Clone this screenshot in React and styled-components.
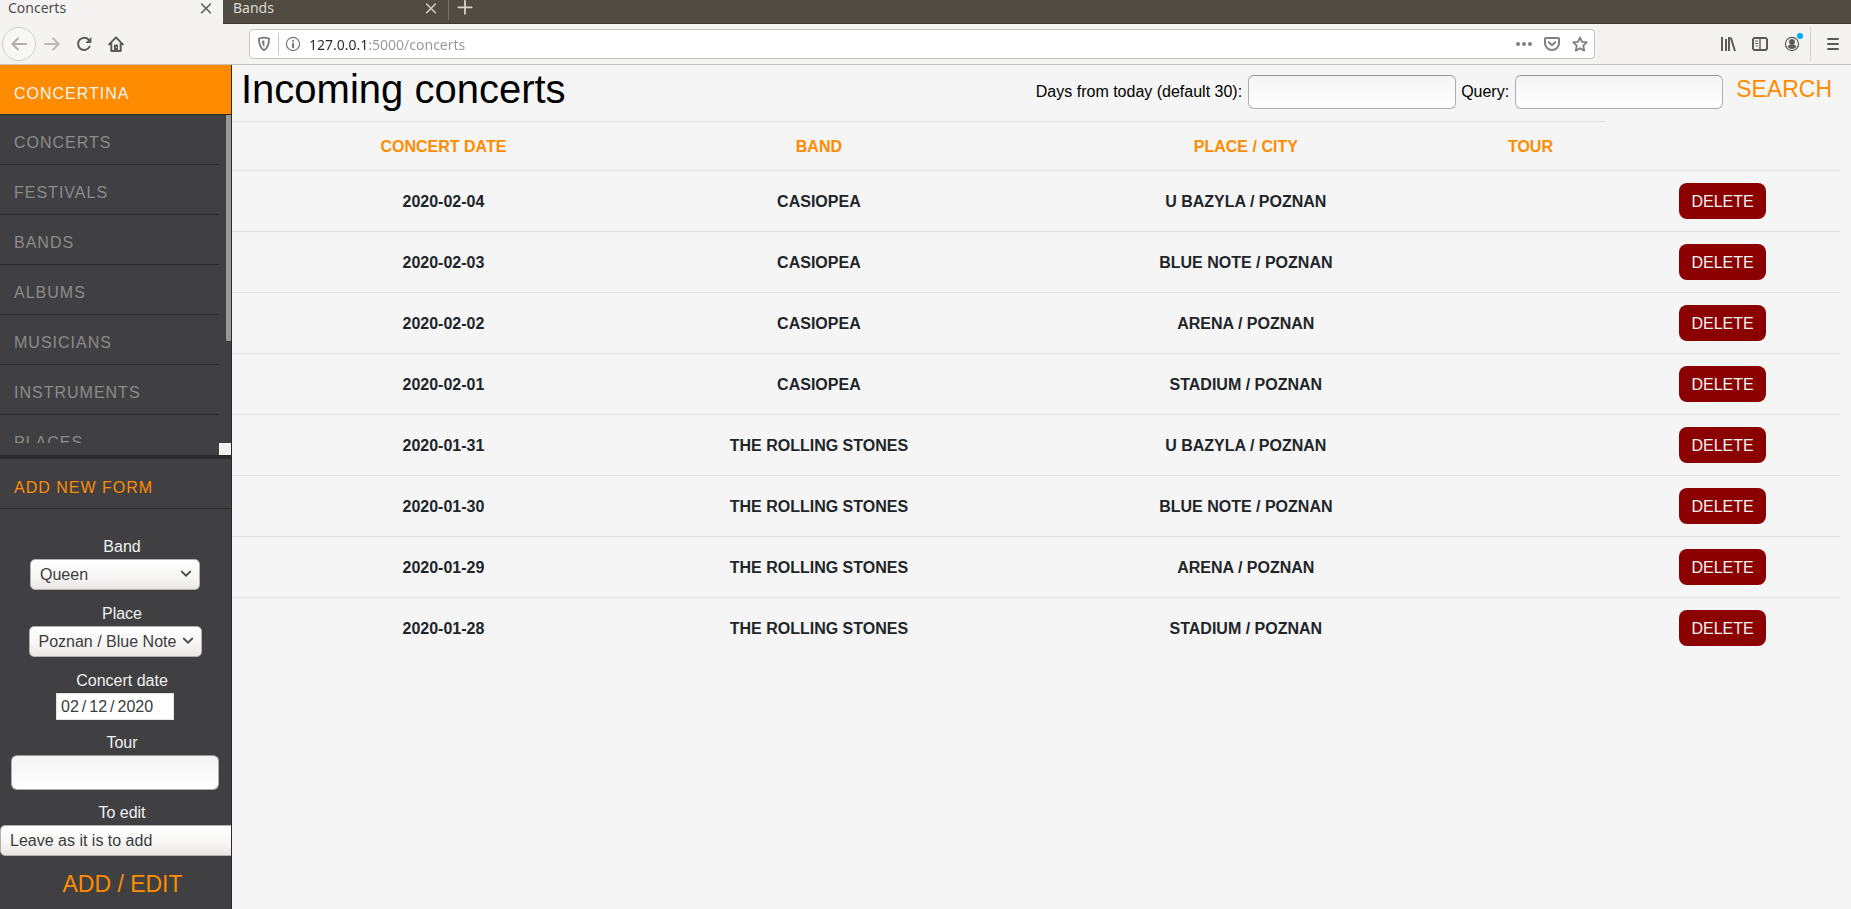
import React from "react";
import styled, { createGlobalStyle, css } from "styled-components";

const ORANGE = "#ff8c00";
const PANEL = "#404042";
const LINE = "#2a2a2a";
const UI_FONT = '"Noto Sans", "Open Sans", sans-serif';
const PAGE_FONT = '"Liberation Sans", Arial, sans-serif';

const GlobalStyle = createGlobalStyle`
  *, *::before, *::after { box-sizing: border-box; }
  body { margin: 0; background: #f5f5f5; font-family: ${PAGE_FONT}; font-size: 16px; line-height: 24px; }
  button, input, select { font: inherit; margin: 0; }
  button { cursor: pointer; }
`;

const Shell = styled.div`
  display: flex;
  flex-direction: column;
  height: 100vh;
  overflow: hidden;
`;

/* ---------- browser chrome ---------- */

const TabStrip = styled.div`
  display: flex;
  flex: none;
  height: 24px;
  background: #504c44;
  font-family: ${UI_FONT};
  font-size: 14px;
  line-height: 16px;
  border-bottom: 1px solid #3b3934;
`;

const Tab = styled.div`
  display: flex;
  justify-content: space-between;
  align-items: flex-start;
  width: ${(p) => (p.$active ? 223 : 225)}px;
  height: ${(p) => (p.$active ? 24 : 23)}px;
  padding: 0 9px 0 ${(p) => (p.$active ? 8 : 10)}px;
  background: ${(p) => (p.$active ? "#f4f3f1" : "transparent")};
  color: ${(p) => (p.$active ? "#4c4c4c" : "#dfdbd2")};
`;

const TabSeparator = styled.span`
  width: 1px;
  height: 20px;
  background: #76726a;
`;

const IconButton = styled.button`
  display: flex;
  align-items: center;
  justify-content: center;
  flex: none;
  width: ${(p) => p.$w || 16}px;
  height: ${(p) => p.$h || 16}px;
  padding: 0;
  border: 0;
  background: none;
  color: ${(p) => p.$color || "#5b5b5b"};
  position: relative;
  ${(p) =>
    p.$round &&
    css`
      border: 1px solid #cfcdca;
      border-radius: 50%;
      background: #f8f7f6;
    `}
`;

const Toolbar = styled.div`
  display: flex;
  align-items: center;
  flex: none;
  height: 41px;
  padding: 0 10px 0 2px;
  background: #f4f3f1;
  border-bottom: 1px solid #c4c2be;
`;

const NavButtons = styled.div`
  display: flex;
  align-items: center;
  width: 247px;
`;

const UrlBar = styled.div`
  display: flex;
  align-items: center;
  flex: 1;
  height: 30px;
  padding: 0 6px;
  background: #fff;
  border: 1px solid #c6c4c0;
  border-radius: 4px;
`;

const UrlSeparator = styled.span`
  width: 1px;
  height: 22px;
  margin: 0 6px;
  background: #c9c9c9;
`;

const UrlInput = styled.input`
  flex: 1;
  min-width: 0;
  height: 28px;
  padding: 0;
  border: 0;
  outline: 0;
  font-family: ${UI_FONT};
  font-size: 14px;
  color: transparent;
  caret-color: #333;
  background: linear-gradient(to right, #2b2b2b 59px, #989898 59px);
  background-clip: text;
  -webkit-background-clip: text;
`;

const UrlActions = styled.div`
  display: flex;
  gap: 12px;
  padding-left: 12px;
`;

const UrlInfo = styled.div`
  display: flex;
  padding-right: 8px;
`;

const BrowserTools = styled.div`
  display: flex;
  align-items: center;
  gap: 16px;
  padding-left: 125px;
`;

const ToolSeparator = styled.span`
  width: 1px;
  height: 34px;
  margin: 0 -2px 0 -6px;
  background: #d2d0cd;
`;

const Notice = styled.span`
  position: absolute;
  top: -3px;
  right: -3px;
  width: 6px;
  height: 6px;
  border-radius: 50%;
  background: #00a8ff;
`;

/* ---------- page ---------- */

const Page = styled.div`
  display: flex;
  flex: 1;
  min-height: 0;
`;

const Sidebar = styled.aside`
  display: flex;
  flex-direction: column;
  flex: none;
  width: 232px;
  background: ${PANEL};
  border-right: 1px solid ${LINE};
  overflow: hidden;
`;

const sideLine = css`
  display: block;
  flex: none;
  height: 50px;
  padding: 17px 14px 0;
  margin: 0;
  border-bottom: 1px solid ${LINE};
  font-size: 16px;
  font-weight: 400;
  letter-spacing: 1px;
  text-decoration: none;
  text-transform: uppercase;
`;

const Brand = styled.a`
  ${sideLine}
  background: ${ORANGE};
  color: #f4f4f4;
`;

const NavLink = styled.a`
  ${sideLine}
  padding-top: 16px;
  color: #8b8b8b;
`;

const FormTitle = styled.h2`
  ${sideLine}
  color: ${ORANGE};
`;

const NavArea = styled.nav`
  display: grid;
  flex: none;
  grid-template-columns: 1fr 12px;
  grid-template-rows: 328px 12px;
  border-bottom: 4px solid ${LINE};
`;

const NavList = styled.ul`
  margin: 0;
  padding: 0;
  list-style: none;
  overflow: hidden;
`;

const ScrollTrack = styled.div`
  display: flex;
  justify-content: flex-end;
`;

const ScrollThumb = styled.div`
  width: 5px;
  height: 226px;
  border-radius: 0 0 1px 1px;
  background: #999;
`;

const ScrollCorner = styled.div`
  grid-column: 2;
  background: #f2f1f0;
`;

const AddForm = styled.form`
  display: flex;
  flex-direction: column;
  align-items: center;
  padding: 26px 1px 0 0;
`;

const Field = styled.div`
  display: flex;
  flex-direction: column;
  align-items: center;
  width: 100%;
  margin-bottom: ${(p) => (p.$select ? 12 : 11)}px;
`;

const FieldLabel = styled.label`
  padding-left: 14px;
  color: #f1f1f1;
`;

const SelectBox = styled.div`
  position: relative;
  width: ${(p) => p.$w}px;
  align-self: ${(p) => (p.$start ? "flex-start" : "center")};
  svg {
    position: absolute;
    right: 8px;
    top: 10px;
    pointer-events: none;
    color: #4a4a4a;
  }
`;

const Select = styled.select`
  display: block;
  appearance: none;
  width: 100%;
  height: 31px;
  padding: 0 20px 0 9px;
  border: 1px solid #b3b1ad;
  border-radius: 5px;
  background: linear-gradient(#fff, #f6f5f4 60%, #e9e7e5);
  color: #3c3c3c;
`;

const TextInput = styled.input`
  width: 208px;
  height: ${(p) => p.$h || 34}px;
  padding: 0 8px;
  border: 1px solid #aeaeae;
  border-top-color: #969696;
  border-radius: 6px;
  background: linear-gradient(#f4f4f4, #fff);
  color: #3c3c3c;
`;

const DateInput = styled.input`
  width: 118px;
  height: 27px;
  padding: 0 0 0 3px;
  border: 1px solid #e3e3e3;
  border-radius: 0;
  background: #fff;
  color: #3c3c3c;
  &::-webkit-calendar-picker-indicator { display: none; }
  &::-webkit-datetime-edit-text { padding: 0 2px; }
`;

const TextButton = styled.button`
  padding: 0 12px 0 13px;
  border: 0;
  background: none;
  color: ${ORANGE};
  font-size: 23px;
  line-height: 28px;
  text-transform: uppercase;
`;

const FormAction = styled.div`
  padding: 2px 0 0 14px;
`;

const Main = styled.main`
  flex: 1;
  min-width: 0;
  overflow: hidden;
`;

const MainHeader = styled.header`
  display: flex;
  justify-content: space-between;
  align-items: flex-start;
  height: 56px;
  padding: 0 7px 0 9px;
`;

const Title = styled.h1`
  margin: 0;
  font-size: 40px;
  font-weight: 400;
  line-height: 48px;
  color: #000;
`;

const SearchForm = styled.form`
  display: flex;
  align-items: flex-start;
  padding-top: 10px;
`;

const SearchField = styled.label`
  display: flex;
  align-items: center;
  gap: 6px;
  margin-left: 5px;
  color: #000;
`;

const Table = styled.table`
  width: calc(100% - 11px);
  table-layout: fixed;
  border-collapse: separate;
  border-spacing: 0;
  text-align: center;
  text-transform: uppercase;
`;

const Col = styled.col`
  width: ${(p) => p.$w}%;
`;

const HeadCell = styled.th`
  padding: 13px 12px 11px;
  border-top: 1px solid #dee2e6;
  color: ${ORANGE};
`;

const Cell = styled.td`
  padding: ${(p) => (p.$action ? "12px" : "13px 12px 11px")};
  border-top: 1px solid #dee2e6;
  color: #212529;
  font-weight: 700;
`;

const DeleteButton = styled.button`
  display: inline-block;
  vertical-align: top;
  height: 36px;
  padding: 2px 12px 0;
  border: 0;
  border-radius: 8px;
  background: #8b0000;
  color: #f4f4f4;
  font-weight: 400;
  text-transform: uppercase;
`;

/* ---------- icons ---------- */

function Icon({ size = 16, w = 2, children, ...rest }) {
  return (
    <svg width={size} height={size} viewBox="0 0 16 16" fill="none" stroke="currentColor" strokeWidth={w}
      strokeLinecap="round" strokeLinejoin="round" aria-hidden="true" {...rest}>
      {children}
    </svg>
  );
}

const CloseIcon = () => <Icon w={1.6}><path d="M3.6 4l8.8 8.8M12.4 4l-8.8 8.8" /></Icon>;
const PlusIcon = () => <Icon w={1.8}><path d="M8 .8v13M1.4 7.3h13.2" /></Icon>;
const BackIcon = () => <Icon><path d="M15 8H1.6M7 2.4L1.4 8 7 13.6" /></Icon>;
const ForwardIcon = () => <Icon><path d="M1 8h13.4M9 2.4L14.6 8 9 13.6" /></Icon>;
const ReloadIcon = () => (
  <Icon>
    <path d="M12.7 3.7A6.1 6.1 0 1 0 13.6 10.6" />
    <path d="M15.4 1v6.1H9.3z" fill="currentColor" stroke="none" />
  </Icon>
);
const HomeIcon = () => (
  <Icon>
    <path d="M1.2 8.4L8 1.4l6.8 7M3.3 7v8h9.4V7" />
    <path d="M6 14V8.6h4V14z" fill="currentColor" stroke="none" />
    <path d="M8.5 11.3v.2" stroke="#f4f3f1" strokeWidth="1" />
  </Icon>
);
const ShieldIcon = () => (
  <Icon w={1.8}>
    <path d="M8 1.7c1.7 0 3.4.3 5 .8 0 5-.4 9.300-5 11.700C3.400 11.800 3 7.500 3 2.500c1.600-.5 3.300-.8 5-.8z" />
    <path d="M8.400 4.500v6.800C6.700 9.700 6 7.600 6 4.800z" fill="currentColor" stroke="none" />
  </Icon>
);
const InfoIcon = () => (
  <Icon w={1.2}>
    <circle cx="8" cy="8" r="6.600" />
    <path d="M8 7.600v3.600" strokeWidth="2" />
    <path d="M8 4.700v.1" strokeWidth="2" />
  </Icon>
);
const DotsIcon = () => (
  <Icon w={0}>
    <circle cx="2" cy="8" r="2" fill="currentColor" />
    <circle cx="8" cy="8" r="2" fill="currentColor" />
    <circle cx="14" cy="8" r="2" fill="currentColor" />
  </Icon>
);
const PocketIcon = () => (
  <Icon>
    <path d="M2 2h12a1 1 0 0 1 1 1v4.300a7 6.700 0 0 1-14 0V3a1 1 0 0 1 1-1z" />
    <path d="M4.800 6.300L8 9.300l3.200-3" />
  </Icon>
);
const StarIcon = () => (
  <Icon w={1.8}>
    <path d="M8 1.500l2 4.300 4.800.6-3.500 3.300.9 4.900L8 12.200l-4.200 2.400.9-4.900L1.200 6.400 6 5.800z" />
  </Icon>
);
const LibraryIcon = () => (
  <Icon strokeLinecap="butt">
    <path d="M2 1v14M6 3v12M9 1v14M10.800 1.500L15 15" />
  </Icon>
);
const SidebarIcon = () => (
  <Icon>
    <rect x="1" y="2" width="14" height="12" rx="2" />
    <path d="M8 2v12" strokeWidth="1.400" />
    <path d="M3.500 5h2M3.500 7.500h2M4.500 10h1" strokeWidth="1" />
  </Icon>
);
const AccountIcon = () => (
  <Icon w={1.200}>
    <circle cx="8" cy="8" r="6.600" />
    <circle cx="8" cy="6" r="2.900" fill="currentColor" stroke="none" />
    <path d="M3.400 10c1.200-.8 2.600-1 3.100-1.300h3c.5.300 1.900.5 3.100 1.300-.7 1.900-2.600 3-4.600 3s-3.900-1.100-4.600-3z" fill="currentColor" stroke="none" />
  </Icon>
);
const MenuIcon = () => <Icon><path d="M3 3h10M3 8h10M3 13h10" /></Icon>;
const Chevron = () => (
  <svg width="12" height="10" viewBox="0 0 12 10" fill="none" stroke="currentColor" strokeWidth="2" strokeLinecap="round" aria-hidden="true">
    <path d="M1.800 2.600L6 6.700l4.200-4.100" />
  </svg>
);

/* ---------- data ---------- */

const NAV = ["Concerts", "Festivals", "Bands", "Albums", "Musicians", "Instruments", "Places"];

const CONCERTS = [
  ["2020-02-04", "Casiopea", "U Bazyla / Poznan"],
  ["2020-02-03", "Casiopea", "Blue Note / Poznan"],
  ["2020-02-02", "Casiopea", "Arena / Poznan"],
  ["2020-02-01", "Casiopea", "Stadium / Poznan"],
  ["2020-01-31", "The Rolling Stones", "U Bazyla / Poznan"],
  ["2020-01-30", "The Rolling Stones", "Blue Note / Poznan"],
  ["2020-01-29", "The Rolling Stones", "Arena / Poznan"],
  ["2020-01-28", "The Rolling Stones", "Stadium / Poznan"],
];

function SelectField({ id, label, value, width, start }) {
  return (
    <Field $select>
      <FieldLabel htmlFor={id}>{label}</FieldLabel>
      <SelectBox $w={width} $start={start}>
        <Select id={id} defaultValue={value}>
          <option>{value}</option>
        </Select>
        <Chevron />
      </SelectBox>
    </Field>
  );
}

function BrowserChrome() {
  return (
    <>
      <TabStrip>
        <Tab $active>
          Concerts
          <IconButton aria-label="Close Concerts"><CloseIcon /></IconButton>
        </Tab>
        <Tab>
          Bands
          <IconButton aria-label="Close Bands" $color="#cfccc5"><CloseIcon /></IconButton>
        </Tab>
        <TabSeparator />
        <IconButton aria-label="New tab" $w={32} $color="#d8d5ce"><PlusIcon /></IconButton>
      </TabStrip>
      <Toolbar>
        <NavButtons>
          <IconButton aria-label="Back" $w={34} $h={34} $round $color="#b1afad"><BackIcon /></IconButton>
          <IconButton aria-label="Forward" $w={32} $h={32} $color="#b9b8b6"><ForwardIcon /></IconButton>
          <IconButton aria-label="Reload" $w={32} $h={32}><ReloadIcon /></IconButton>
          <IconButton aria-label="Home" $w={32} $h={32}><HomeIcon /></IconButton>
        </NavButtons>
        <UrlBar>
          <IconButton aria-label="Tracking protection" $color="#777"><ShieldIcon /></IconButton>
          <UrlSeparator />
          <UrlInfo>
            <IconButton aria-label="Site information" $color="#777"><InfoIcon /></IconButton>
          </UrlInfo>
          <UrlInput aria-label="Address" defaultValue="127.0.0.1:5000/concerts" />
          <UrlActions>
            <IconButton aria-label="Page actions" $color="#808080"><DotsIcon /></IconButton>
            <IconButton aria-label="Save to Pocket" $color="#808080"><PocketIcon /></IconButton>
            <IconButton aria-label="Bookmark" $color="#808080"><StarIcon /></IconButton>
          </UrlActions>
        </UrlBar>
        <BrowserTools>
          <IconButton aria-label="Library"><LibraryIcon /></IconButton>
          <IconButton aria-label="Sidebars"><SidebarIcon /></IconButton>
          <IconButton aria-label="Account"><AccountIcon /><Notice /></IconButton>
          <ToolSeparator />
          <IconButton aria-label="Menu"><MenuIcon /></IconButton>
        </BrowserTools>
      </Toolbar>
    </>
  );
}

export default function App() {
  return (
    <Shell>
      <GlobalStyle />
      <BrowserChrome />
      <Page>
        <Sidebar>
          <Brand href="#home">Concertina</Brand>
          <NavArea>
            <NavList>
              {NAV.map((n) => (
                <li key={n}><NavLink href={"#" + n.toLowerCase()}>{n}</NavLink></li>
              ))}
            </NavList>
            <ScrollTrack><ScrollThumb /></ScrollTrack>
            <ScrollCorner />
          </NavArea>
          <FormTitle>Add new form</FormTitle>
          <AddForm onSubmit={(e) => e.preventDefault()}>
            <SelectField id="band" label="Band" value="Queen" width={170} />
            <SelectField id="place" label="Place" value="Poznan / Blue Note" width={173} />
            <Field>
              <FieldLabel htmlFor="date">Concert date</FieldLabel>
              <DateInput id="date" type="date" defaultValue="2020-02-12" />
            </Field>
            <Field>
              <FieldLabel htmlFor="tour">Tour</FieldLabel>
              <TextInput id="tour" type="text" $h={35} />
            </Field>
            <SelectField id="edit" label="To edit" value="Leave as it is to add" width={320} start />
            <FormAction><TextButton>Add / edit</TextButton></FormAction>
          </AddForm>
        </Sidebar>
        <Main>
          <MainHeader>
            <Title>Incoming concerts</Title>
            <SearchForm onSubmit={(e) => e.preventDefault()}>
              <SearchField>Days from today (default 30):<TextInput type="text" /></SearchField>
              <SearchField>Query:<TextInput type="text" /></SearchField>
              <TextButton>Search</TextButton>
            </SearchForm>
          </MainHeader>
          <Table>
            <colgroup>
              <Col $w={3.3} /><Col $w={19.7} /><Col $w={27} /><Col $w={26.1} /><Col $w={9.3} /><Col $w={14.6} />
            </colgroup>
            <thead>
              <tr>
                <HeadCell />
                <HeadCell scope="col">Concert date</HeadCell>
                <HeadCell scope="col">Band</HeadCell>
                <HeadCell scope="col">Place / City</HeadCell>
                <HeadCell scope="col">Tour</HeadCell>
              </tr>
            </thead>
            <tbody>
              {CONCERTS.map(([date, band, place]) => (
                <tr key={date}>
                  <Cell />
                  <Cell>{date}</Cell>
                  <Cell>{band}</Cell>
                  <Cell>{place}</Cell>
                  <Cell />
                  <Cell $action><DeleteButton>Delete</DeleteButton></Cell>
                </tr>
              ))}
            </tbody>
          </Table>
        </Main>
      </Page>
    </Shell>
  );
}
